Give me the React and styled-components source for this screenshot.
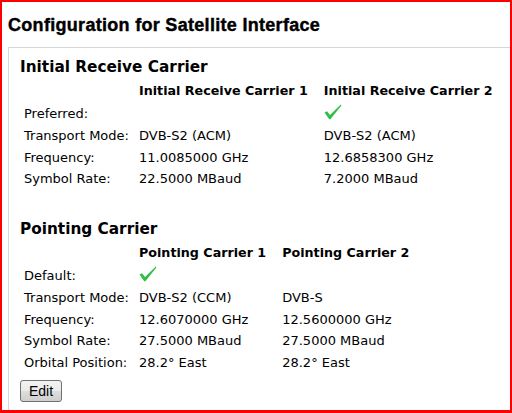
import React from "react";
import styled, { createGlobalStyle } from "styled-components";

const GlobalStyle = createGlobalStyle`
  html, body {
    margin: 0;
    padding: 0;
    background: #fff;
  }
`;

const receive = {
  title: "Initial Receive Carrier",
  heads: ["Initial Receive Carrier 1", "Initial Receive Carrier 2"],
  flag: "Preferred:",
  checked: 1,
  rows: [
    ["Transport Mode:", "DVB-S2 (ACM)", "DVB-S2 (ACM)"],
    ["Frequency:", "11.0085000 GHz", "12.6858300 GHz"],
    ["Symbol Rate:", "22.5000 MBaud", "7.2000 MBaud"],
  ],
};

const pointing = {
  title: "Pointing Carrier",
  heads: ["Pointing Carrier 1", "Pointing Carrier 2"],
  flag: "Default:",
  checked: 0,
  rows: [
    ["Transport Mode:", "DVB-S2 (CCM)", "DVB-S"],
    ["Frequency:", "12.6070000 GHz", "12.5600000 GHz"],
    ["Symbol Rate:", "27.5000 MBaud", "27.5000 MBaud"],
    ["Orbital Position:", "28.2° East", "28.2° East"],
  ],
};

function Check() {
  return (
    <svg width="18" height="16" viewBox="0 0 18 16">
      <path
        d="M0.5 8.5 L3 7.2 L6 11 L16.8 0.6 L17.4 1.4 L6.4 15.2 L5.2 15.2 Z"
        fill="#2fbf45"
      />
    </svg>
  );
}

function CarrierTable({ data }) {
  return (
    <Section>
      <SectionTitle>{data.title}</SectionTitle>
      <Grid>
        <Head />
        {data.heads.map((h) => (
          <Head key={h}>{h}</Head>
        ))}
        <Cell $tall>{data.flag}</Cell>
        {data.heads.map((h, i) => (
          <Cell key={h} $tall>
            {i === data.checked && <Check />}
          </Cell>
        ))}
        {data.rows.map((r) =>
          r.map((v, i) => <Cell key={r[0] + i}>{v}</Cell>)
        )}
      </Grid>
    </Section>
  );
}

export default function App() {
  return (
    <Frame>
      <GlobalStyle />
      <Title>Configuration for Satellite Interface</Title>
      <Panel>
        <CarrierTable data={receive} />
        <CarrierTable data={pointing} />
        <EditButton>Edit</EditButton>
      </Panel>
    </Frame>
  );
}

const Frame = styled.div`
  box-sizing: border-box;
  width: 512px;
  height: 413px;
  border: 2px solid #ff0000;
  border-bottom-width: 3px;
  overflow: hidden;
  padding: 0 0 0 6px;
`;

const Title = styled.h1`
  margin: 0;
  padding-top: 2px;
  line-height: 43px;
  font-family: "Liberation Sans", Arial, sans-serif;
  font-weight: 700;
  font-size: 18px;
  letter-spacing: 0.3px;
  -webkit-text-stroke: 0.4px #000;
  color: #000;
`;

const Panel = styled.div`
  width: 560px;
  height: 420px;
  display: flex;
  flex-direction: column;
  align-items: flex-start;
  border-top: 1px solid #d6d6d6;
  border-left: 1px solid #d6d6d6;
  padding: 8px 0 0 11px;
  font-family: "DejaVu Sans", Verdana, sans-serif;
  color: #000;
`;

const Section = styled.div`
  margin-bottom: 28.5px;
  &:last-of-type {
    margin-bottom: 7px;
  }
`;

const SectionTitle = styled.h2`
  margin: 0 0 2px;
  font-size: 15.3px;
  line-height: 22px;
  font-weight: bold;
`;

const Grid = styled.div`
  display: grid;
  grid-template-columns: 115px auto auto;
  justify-content: start;
  padding-left: 4px;
`;

const Head = styled.div`
  font-size: 12.7px;
  font-weight: bold;
  line-height: 22px;
  height: 22px;
  padding-right: 16px;
  white-space: nowrap;
`;

const Cell = styled.div`
  font-size: 13px;
  line-height: 21px;
  height: ${(p) => (p.$tall ? "23px" : "21.5px")};
  padding-right: 16px;
  display: flex;
  align-items: center;
  white-space: nowrap;
  svg {
    margin-bottom: 4px;
  }
`;

const EditButton = styled.button`
  margin: 0;
  width: 42px;
  height: 22px;
  padding: 0;
  border: 1px solid #707070;
  border-radius: 3px;
  background: linear-gradient(#f2f2f2 0%, #ebebeb 50%, #dddddd 51%, #cfcfcf 100%);
  font-family: "Liberation Sans", Arial, sans-serif;
  font-size: 14px;
  color: #000;
`;
